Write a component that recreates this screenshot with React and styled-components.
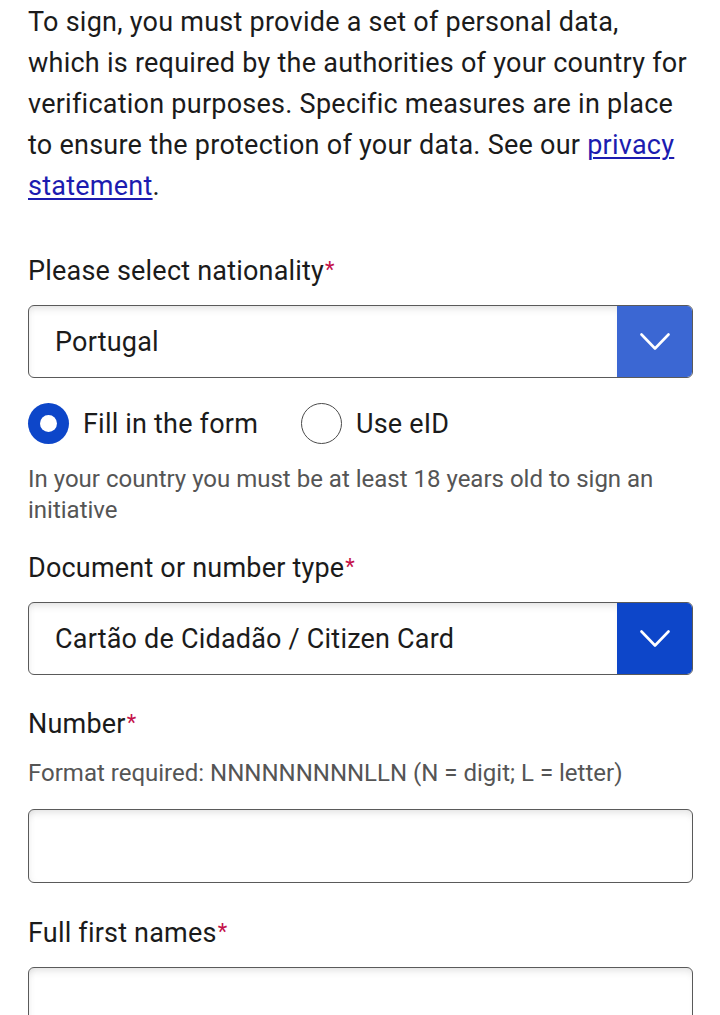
import React from "react";
import styled, { createGlobalStyle } from "styled-components";

const GlobalStyle = createGlobalStyle`
  html, body {
    margin: 0;
    padding: 0;
    background: #fff;
  }

  body {
    font-family: Roboto, "Noto Sans", "Liberation Sans", sans-serif;
    color: #1b1b1b;
  }
`;

const Page = styled.div`
  width: 720px;
  box-sizing: border-box;
  padding: 2px 27px 40px 28px;
`;

const Intro = styled.p`
  margin: 0;
  font-size: 27px;
  line-height: 41px;
  letter-spacing: 0.25px;

  a {
    color: #1c1cb0;
    text-decoration: underline;
    text-underline-offset: 3px;
    text-decoration-thickness: 1.5px;
  }
`;

const Label = styled.label`
  display: block;
  margin-top: ${(p) => p.$gap}px;
  margin-bottom: 16px;
  font-size: 27px;
  line-height: 36px;
  letter-spacing: 0.2px;
  color: #1b1b1b;

  span {
    color: #c4124a;
    font-size: 22px;
    vertical-align: 3px;
    margin-left: 1px;
  }
`;

const Hint = styled.p`
  margin: ${(p) => p.$top}px 0 ${(p) => p.$bottom}px;
  font-size: 24px;
  line-height: 31px;
  color: #555;
`;

const SelectBox = styled.div`
  display: flex;
  height: 73px;
  box-sizing: border-box;
  border: 1px solid #5a5a5a;
  border-radius: 6px;
  overflow: hidden;
  background: #fff;
`;

const SelectValue = styled.div`
  flex: 1;
  display: flex;
  align-items: center;
  padding-left: 26px;
  font-size: 27px;
  letter-spacing: 0.2px;
  color: #1b1b1b;
  box-shadow: inset 0 7px 9px -5px rgba(0, 0, 0, 0.13),
    inset 5px 0 8px -6px rgba(0, 0, 0, 0.08);
`;

const SelectButton = styled.div`
  flex: none;
  width: 75px;
  display: flex;
  align-items: center;
  justify-content: center;
  background: ${(p) => (p.$muted ? "#3b67d3" : "#0d46c9")};
`;

const TextInput = styled.div`
  height: 74px;
  box-sizing: border-box;
  border: 1px solid #5a5a5a;
  border-radius: 6px;
  background: #fff;
  box-shadow: inset 0 7px 9px -5px rgba(0, 0, 0, 0.13),
    inset 5px 0 8px -6px rgba(0, 0, 0, 0.08);
`;

const RadioRow = styled.div`
  display: flex;
  align-items: center;
  margin-top: 25px;
  height: 41px;
`;

const RadioOption = styled.div`
  display: flex;
  align-items: center;
  gap: 14px;
  margin-right: 43px;
  font-size: 27px;
  letter-spacing: 0.2px;
  color: #1b1b1b;
`;

const RadioDot = styled.span`
  width: 41px;
  height: 41px;
  box-sizing: border-box;
  border-radius: 50%;
  display: flex;
  align-items: center;
  justify-content: center;
  background: ${(p) => (p.$checked ? "#0d46c9" : "#fff")};
  border: ${(p) => (p.$checked ? "none" : "1.5px solid #4a4a4a")};

  &::after {
    content: "";
    display: ${(p) => (p.$checked ? "block" : "none")};
    width: 17px;
    height: 17px;
    border-radius: 50%;
    background: #fff;
  }
`;

const Chevron = () => (
  <svg width="30" height="18" viewBox="0 0 30 18" fill="none">
    <polyline
      points="1.5,1.5 15,15.5 28.5,1.5"
      stroke="#fff"
      strokeWidth="2.6"
      strokeLinecap="round"
      strokeLinejoin="round"
    />
  </svg>
);

const Select = ({ value, muted }) => (
  <SelectBox>
    <SelectValue>{value}</SelectValue>
    <SelectButton $muted={muted}>
      <Chevron />
    </SelectButton>
  </SelectBox>
);

const Required = () => <span>*</span>;

export default function App() {
  return (
    <Page>
      <GlobalStyle />
      <Intro>
        To sign, you must provide a set of personal data, which is required by
        the authorities of your country for verification purposes. Specific
        measures are in place to ensure the protection of your data. See our{" "}
        <a href="#privacy">privacy statement</a>.
      </Intro>

      <Label $gap={45}>
        Please select nationality<Required />
      </Label>
      <Select value="Portugal" muted />

      <RadioRow>
        <RadioOption>
          <RadioDot $checked />
          Fill in the form
        </RadioOption>
        <RadioOption>
          <RadioDot />
          Use eID
        </RadioOption>
      </RadioRow>

      <Hint $top={20} $bottom={0}>
        In your country you must be at least 18 years old to sign an initiative
      </Hint>

      <Label $gap={23}>
        Document or number type<Required />
      </Label>
      <Select value="Cartão de Cidadão / Citizen Card" />

      <Label $gap={30}>
        Number<Required />
      </Label>
      <Hint $top={0} $bottom={20}>
        Format required: NNNNNNNNNLLN (N = digit; L = letter)
      </Hint>
      <TextInput />

      <Label $gap={31}>
        Full first names<Required />
      </Label>
      <TextInput />
    </Page>
  );
}
